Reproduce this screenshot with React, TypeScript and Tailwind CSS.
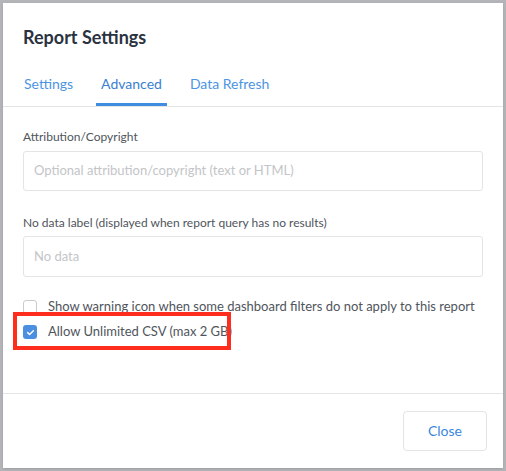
import React from "react";

const tabs = ["Settings", "Advanced", "Data Refresh"];

function Checkbox({ checked }: { checked?: boolean }) {
  if (checked) {
    return (
      <span className="flex h-[14px] w-[14px] shrink-0 items-center justify-center rounded-[3px] bg-[#4a8fe0]">
        <svg viewBox="0 0 12 12" className="h-[9px] w-[9px]">
          <path d="M2.2 6.2 L4.8 8.6 L9.8 3.6" fill="none" stroke="#fff" strokeWidth="2" strokeLinecap="round" strokeLinejoin="round" />
        </svg>
      </span>
    );
  }
  return <span className="h-[14px] w-[14px] shrink-0 rounded-[3px] border border-[#c9cbcf] bg-white" />;
}

export default function App() {
  return (
    <div className="h-[471px] w-[506px] overflow-hidden bg-[#b4b5b9] pl-[3px] pt-[3px] font-['Lato','Open_Sans',sans-serif]">
      <div className="relative flex h-[465px] w-[500px] flex-col bg-white shadow-sm">
        {/* header */}
        <h1 className="pl-5 pt-[22px] text-[18px] font-bold leading-6 text-[#2b3240]">Report Settings</h1>

        {/* tabs */}
        <div className="mt-[25px] flex gap-[18px] border-b border-[#e4e5e7] pl-4">
          {tabs.map((t) => (
            <div
              key={t}
              className={`border-b-[3px] px-[5px] pb-[9px] text-[14px] leading-5 ${
                t === "Advanced" ? "border-[#3f8de0] text-[#3a7fd0]" : "border-transparent text-[#4d94e2]"
              }`}
            >
              {t}
            </div>
          ))}
        </div>

        {/* body */}
        <div className="flex flex-1 flex-col px-5 pt-[21px]">
          <label className="mb-[5px] text-[12px] leading-[18px] text-[#50555c]">Attribution/Copyright</label>
          <div className="flex h-[40px] items-center rounded-[3px] border border-[#e3e4e6] px-[10px] text-[13px] text-[#c3c5c8]">
            Optional attribution/copyright (text or HTML)
          </div>

          <label className="mb-[4px] mt-[23px] text-[12px] leading-[18px] text-[#50555c]">
            No data label (displayed when report query has no results)
          </label>
          <div className="flex h-[41px] items-center rounded-[3px] border border-[#e3e4e6] px-[10px] text-[13px] text-[#c3c5c8]">
            No data
          </div>

          <div className="mt-[20px] flex flex-col gap-[5px]">
            <div className="flex h-5 items-center gap-[11px] text-[13px] text-[#50555c]">
              <Checkbox />
              Show warning icon when some dashboard filters do not apply to this report
            </div>
            <div className="flex h-5 items-center gap-[11px] text-[13px] text-[#50555c]">
              <Checkbox checked />
              Allow Unlimited CSV (max 2 GB)
            </div>
          </div>
        </div>

        {/* footer */}
        <div className="flex justify-end border-t border-[#e4e5e7] px-4 py-[17px]">
          <button className="h-[40px] w-[84px] rounded-[4px] border border-[#e3e4e6] bg-white pb-px text-[14px] text-[#3a87dc]">
            Close
          </button>
        </div>

        {/* annotation */}
        <div className="pointer-events-none absolute left-[10px] top-[309px] h-[38px] w-[218px] border-[4px] border-[#ff2d1e]" />
      </div>
    </div>
  );
}
